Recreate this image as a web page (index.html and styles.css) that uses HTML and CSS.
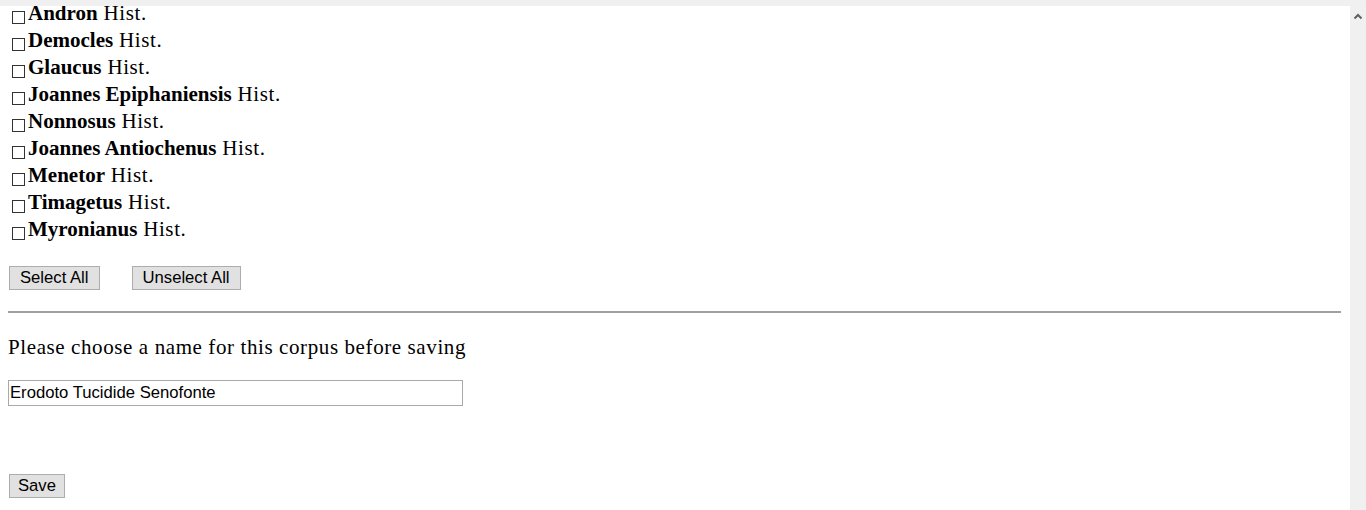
FILE: index.html
```html
<!DOCTYPE html>
<html lang="en">
<head>
<meta charset="utf-8">
<title>Corpus</title>
<link rel="stylesheet" href="styles.css">
</head>
<body>
<div class="topbar"></div>
<div class="viewport">
  <main class="page">
    <ul class="authors">
      <li class="author"><input type="checkbox" class="check"><span><b>Andron</b> Hist.</span></li>
      <li class="author"><input type="checkbox" class="check"><span><b>Democles</b> Hist.</span></li>
      <li class="author"><input type="checkbox" class="check"><span><b>Glaucus</b> Hist.</span></li>
      <li class="author"><input type="checkbox" class="check"><span><b>Joannes Epiphaniensis</b> Hist.</span></li>
      <li class="author"><input type="checkbox" class="check"><span><b>Nonnosus</b> Hist.</span></li>
      <li class="author"><input type="checkbox" class="check"><span><b>Joannes Antiochenus</b> Hist.</span></li>
      <li class="author"><input type="checkbox" class="check"><span><b>Menetor</b> Hist.</span></li>
      <li class="author"><input type="checkbox" class="check"><span><b>Timagetus</b> Hist.</span></li>
      <li class="author"><input type="checkbox" class="check"><span><b>Myronianus</b> Hist.</span></li>
    </ul>
    <div class="actions">
      <button class="btn" type="button">Select All</button>
      <button class="btn" type="button">Unselect All</button>
    </div>
    <hr class="rule">
    <p class="prompt">Please choose a name for this corpus before saving</p>
    <input class="name" type="text" value="Erodoto Tucidide Senofonte">
    <div class="save-row">
      <button class="btn btn-save" type="button">Save</button>
    </div>
  </main>
  <div class="scrollbar">
    <svg class="arrow" width="16" height="16" viewBox="0 0 16 16"><path d="M4.5 10.5 L8 7 L11.5 10.5" fill="none" stroke="#606060" stroke-width="2"/></svg>
  </div>
</div>
</body>
</html>
```

FILE: styles.css
```css
html, body {
  margin: 0;
  padding: 0;
  height: 100%;
  overflow: hidden;
  background: #fff;
}

.topbar {
  height: 6px;
  background: #f0f0f0;
}

.viewport {
  display: flex;
  height: 504px;
}

.page {
  flex: 1;
  padding: 0 8px;
  overflow: hidden;
  font-family: "Liberation Serif", "Times New Roman", serif;
  font-size: 21px;
  letter-spacing: 0.6px;
  color: #000;
}

.page b {
  letter-spacing: 0;
}

.scrollbar {
  width: 16px;
  background: #f0f0f0;
  display: flex;
  flex-direction: column;
  align-items: center;
}

.arrow {
  display: block;
  margin-top: 2px;
}

.authors {
  list-style: none;
  margin: -6px 0 0 0;
  padding: 0;
}

.author {
  display: flex;
  align-items: center;
  height: 27px;
  line-height: 27px;
}

.check {
  appearance: none;
  -webkit-appearance: none;
  width: 13px;
  height: 13px;
  margin: 0 3px 0 4px;
  border: 1px solid #333;
  background: #fff;
  border-radius: 0;
  flex: none;
  position: relative;
  top: 4px;
}

.actions {
  display: flex;
  gap: 32px;
  margin-top: 23px;
  padding-left: 1px;
}

.btn {
  box-sizing: border-box;
  height: 24px;
  padding: 0 10px;
  margin: 0;
  font-family: "Liberation Sans", Arial, sans-serif;
  font-size: 16.67px;
  letter-spacing: 0;
  color: #000;
  background: #e1e1e1;
  border: 1px solid #adadad;
  border-radius: 0;
  line-height: 20px;
}

.btn-save {
  padding: 0 8px;
}

.rule {
  margin: 21px 1px 0 0;
  border: none;
  height: 2px;
  background: #a0a0a0;
}

.prompt {
  margin: 22px 0 0 0;
  line-height: 24px;
}

.name {
  display: block;
  box-sizing: border-box;
  width: 455px;
  height: 26px;
  margin: 21px 0 0 0;
  padding: 0 1px;
  font-family: "Liberation Sans", Arial, sans-serif;
  font-size: 16.67px;
  letter-spacing: 0;
  color: #000;
  border: 1px solid #a9a9a9;
  border-radius: 0;
  outline: none;
}

.save-row {
  margin-top: 66px;
  padding-left: 1px;
}
```
